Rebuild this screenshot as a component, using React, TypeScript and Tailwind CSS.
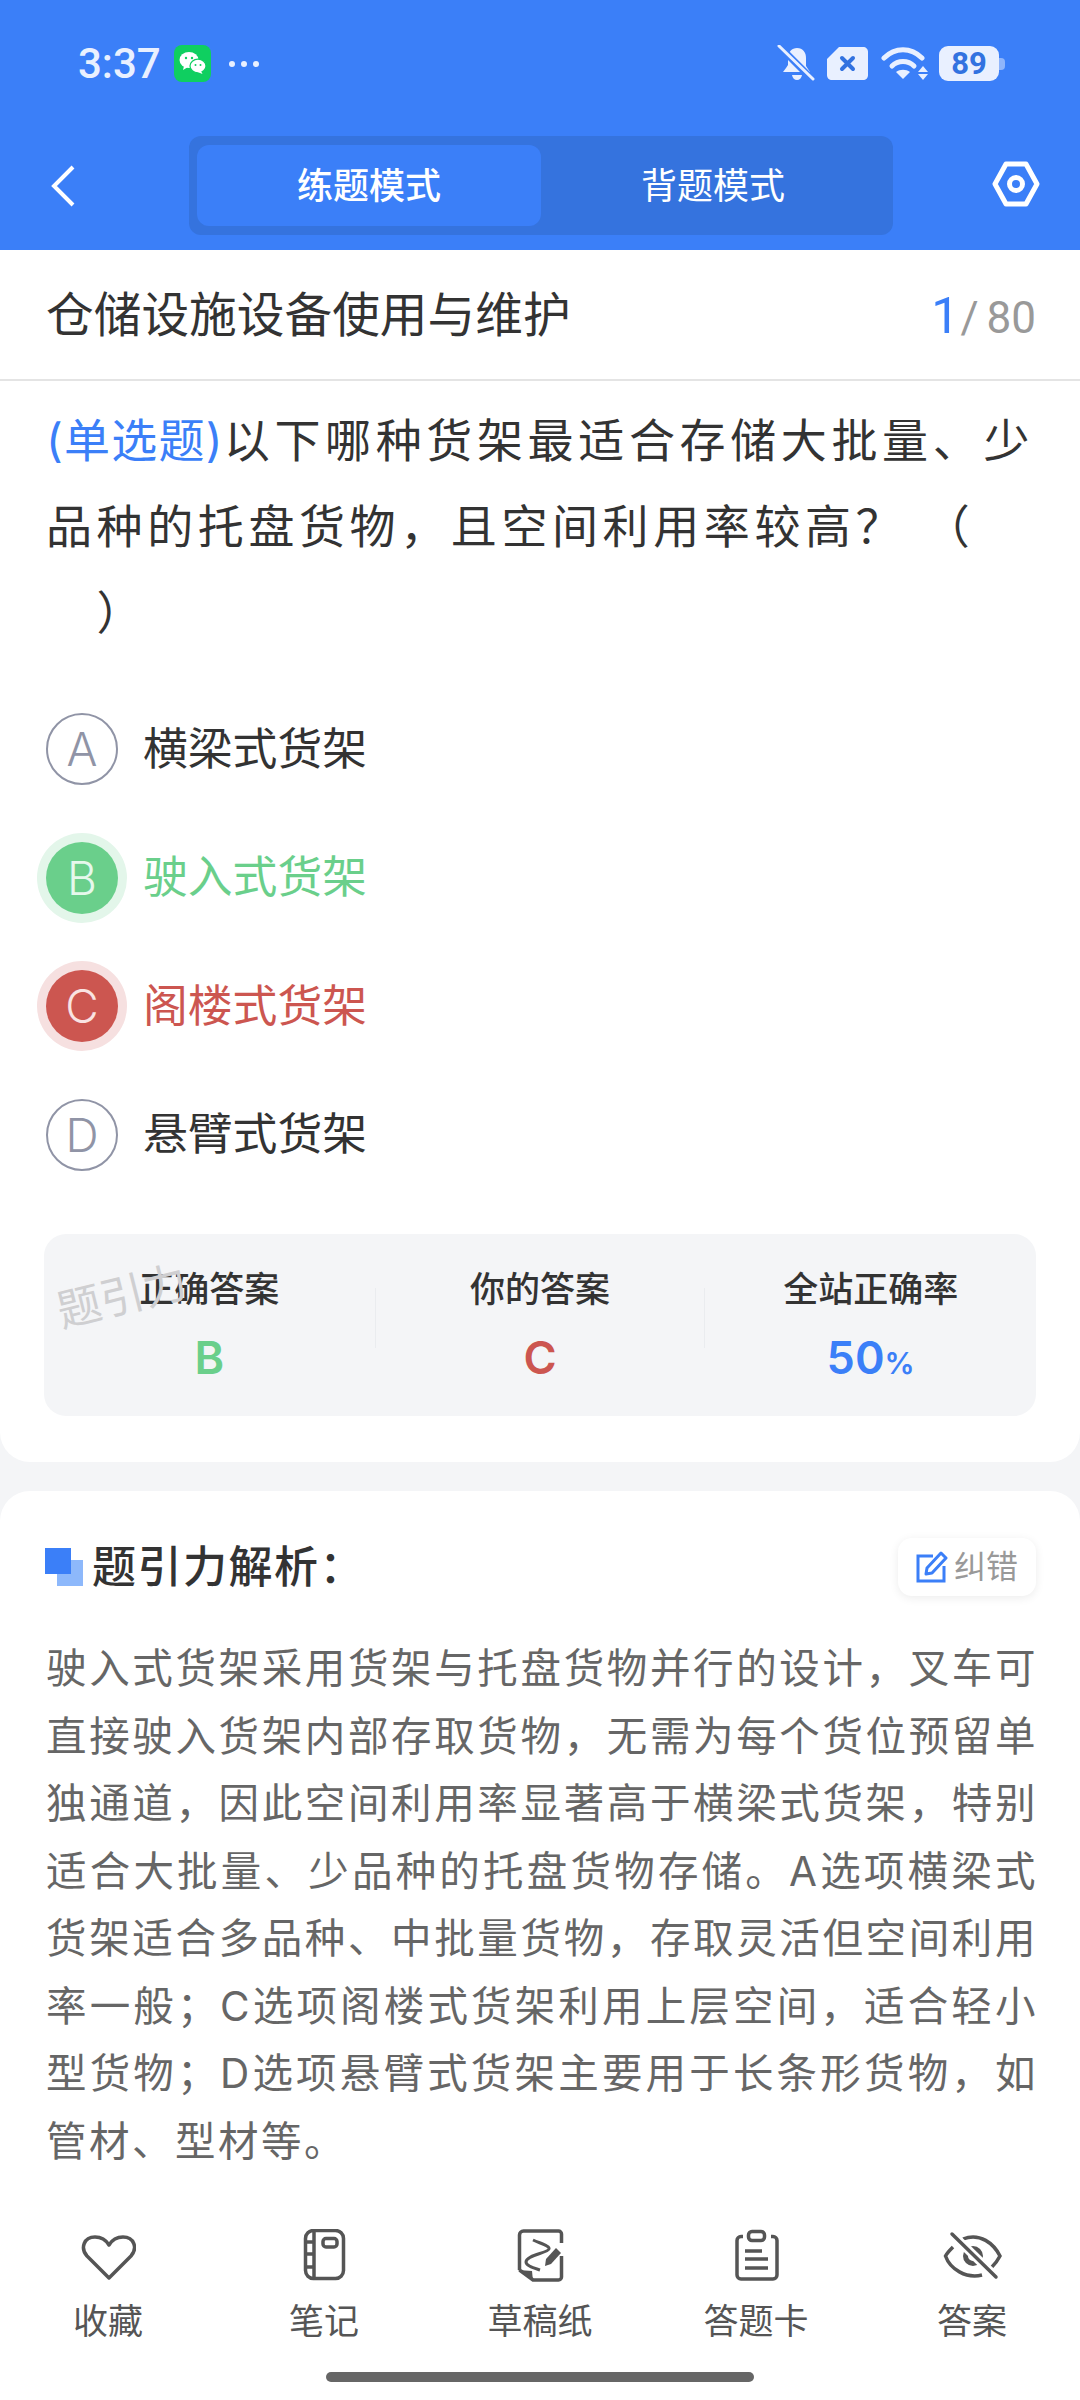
const FONT = "font-['Inter','Noto_Sans_CJK_SC',sans-serif]";

function StatusBar() {
  return (
    <div className="flex h-[136px] items-start justify-between pl-[78px] pr-[75px] pt-[45px] text-[#e9f0ff]">
      <div className="flex h-[37px] items-center">
        <span className="w-[80px] font-['Roboto'] text-[42px] leading-none font-medium">3:37</span>
        <svg className="ml-[16px]" width="37" height="37" viewBox="0 0 37 37">
          <rect width="37" height="37" rx="8" fill="#0fcf60" />
          <ellipse cx="15" cy="15" rx="9.5" ry="8" fill="#fff" />
          <path d="M10 21l-1 4 5-3z" fill="#fff" />
          <ellipse cx="24" cy="21" rx="8" ry="6.8" fill="#fff" stroke="#0fcf60" strokeWidth="1.2" />
          <path d="M27 26l1.5 3-5-2z" fill="#fff" />
          <circle cx="12" cy="13" r="1.2" fill="#0fcf60" />
          <circle cx="18" cy="13" r="1.2" fill="#0fcf60" />
          <circle cx="21.5" cy="20" r="1" fill="#0fcf60" />
          <circle cx="26.5" cy="20" r="1" fill="#0fcf60" />
        </svg>
        <div className="ml-[18px] flex gap-[6px]">
          <span className="h-[6px] w-[6px] rounded-full bg-[#e9f0ff]" />
          <span className="h-[6px] w-[6px] rounded-full bg-[#e9f0ff]" />
          <span className="h-[6px] w-[6px] rounded-full bg-[#e9f0ff]" />
        </div>
      </div>
      <div className="flex h-[37px] items-center">
        <svg width="38" height="38" viewBox="0 0 38 38">
          <path d="M20 3c6 0 9 4.500 9 10v8l4 6H17L6 27l3-4 2-3v-7c0-6 4-10 9-10z" fill="#e9f0ff" />
          <path d="M15 30h10c-.5 3-2.500 5-5 5s-4.500-2-5-5z" fill="#e9f0ff" />
          <path d="M2 1l33 33" stroke="#3b7ff8" strokeWidth="7" />
          <path d="M2 1l34 33" stroke="#e9f0ff" strokeWidth="3" strokeLinecap="round" />
        </svg>
        <svg className="ml-[11px]" width="43" height="35" viewBox="0 0 43 35">
          <path d="M13 1h24c3 0 5 2 5 5v23c0 3-2 5-5 5H6c-3 0-5-2-5-5V13z" fill="#e9f0ff" />
          <path d="M16 12l11 11M27 12L16 23" stroke="#3272e0" strokeWidth="4" strokeLinecap="round" />
        </svg>
        <svg className="ml-[12px]" width="47" height="35" viewBox="0 0 47 35">
          <path d="M3 12c11-11 27-11 38 0" fill="none" stroke="#e9f0ff" strokeWidth="5" strokeLinecap="round" />
          <path d="M11 20c6-6 16-6 22 0" fill="none" stroke="#e9f0ff" strokeWidth="5" strokeLinecap="round" />
          <path d="M15 26c4-3 10-3 14 0l-7 7z" fill="#e9f0ff" />
          <path d="M42 20l5 6H37zM37 28h10l-5 6z" fill="#e9f0ff" />
        </svg>
        <div className="ml-[11px] flex items-center">
          <div className="flex h-[35px] w-[60px] items-center justify-center rounded-[9px] bg-[#e9f0ff] font-['Roboto'] text-[31px] leading-none font-bold text-[#3272e0]">
            89
          </div>
          <div className="h-[12px] w-[6px] rounded-r-[4px] bg-[#8fb5fb]" />
        </div>
      </div>
    </div>
  );
}

function Header() {
  return (
    <div className="bg-[#3b7ff8]">
      <StatusBar />
      <div className="flex h-[114px] items-start justify-between pl-[50px] pr-[40px]">
        <svg className="mt-[28px]" width="26" height="44" viewBox="0 0 26 44" fill="none">
          <path d="M23 3L4 22l19 19" stroke="#fff" strokeWidth="4" />
        </svg>
        <div className="ml-[112px] flex h-[99px] w-[704px] rounded-[12px] bg-[#3573de] py-[9px] pl-[8px] pr-[8px] text-[36px] text-white">
          <div className="flex w-[344px] items-center justify-center rounded-[12px] bg-[#3b7ff8] font-medium">练题模式</div>
          <div className="flex flex-1 items-center justify-center">背题模式</div>
        </div>
        <svg className="ml-[98px] mt-[25px]" width="48" height="46" viewBox="0 0 48 46" fill="none">
          <path d="M14 3h20l11 20-11 20H14L3 23z" stroke="#fff" strokeWidth="5" strokeLinejoin="round" />
          <circle cx="24" cy="23" r="6.500" stroke="#fff" strokeWidth="5" />
        </svg>
      </div>
    </div>
  );
}

function Option({ letter, text, tone }: { letter: string; text: string; tone?: "right" | "wrong" }) {
  let circle = "border-2 border-[#9094a6] text-[#9094a6]";
  let label = "text-[#333333]";
  if (tone === "right") {
    circle = "bg-[#6acf8b] text-[#e6f8ec] shadow-[0_0_0_9px_#e3f6ea]";
    label = "text-[#6acf8b]";
  }
  if (tone === "wrong") {
    circle = "bg-[#cc5650] text-[#f9e3e2] shadow-[0_0_0_9px_#f6e0e0]";
    label = "text-[#cc5650]";
  }
  return (
    <div className="flex h-[128.500px] items-center">
      <div className={`flex h-[72px] w-[72px] items-center justify-center rounded-full text-[46px] leading-none font-light ${circle}`}>
        {letter}
      </div>
      <span className={`ml-[25px] text-[44.800px] leading-none ${label}`}>{text}</span>
    </div>
  );
}

function Stat({ title, children }: { title: string; children: React.ReactNode }) {
  return (
    <div className="flex flex-col items-center">
      <div className="text-[35px] leading-[50px] font-medium text-[#333333]">{title}</div>
      <div className="mt-[15px] h-[58px] text-[45px] leading-[58px] font-semibold">{children}</div>
    </div>
  );
}

function Question() {
  return (
    <div className="rounded-b-[30px] bg-white pb-[46px]">
      <div className="flex h-[131px] items-center justify-between border-b-2 border-[#e4e4e4] pl-[46px] pr-[44px] pt-[2px]">
        <span className="text-[47.700px] leading-none text-[#333333]">仓储设施设备使用与维护</span>
        <span className="flex items-baseline font-['Roboto'] leading-none text-[#999999]">
          <span className="text-[50px] text-[#3b7ff8]">1</span>
          <span className="ml-[1px] text-[44px]">/</span>
          <span className="ml-[8px] text-[44px]">80</span>
        </span>
      </div>
      <div className="px-[46px]">
        <p className="pt-[16px] text-justify text-[46px] leading-[86px] tracking-[4.600px] text-[#333333]">
          <span className="tracking-[1.200px] text-[#3b7ff8]">(单选题)</span>
          以下哪种货架最适合存储大批量、少品种的托盘货物，且空间利用率较高？ （
          <br />
          &emsp;）
        </p>
        <div className="mt-[30px]">
          <Option letter="A" text="横梁式货架" />
          <Option letter="B" text="驶入式货架" tone="right" />
          <Option letter="C" text="阁楼式货架" tone="wrong" />
          <Option letter="D" text="悬臂式货架" />
        </div>
      </div>
      <div className="relative mx-[44px] mt-[35px] grid h-[182px] grid-cols-3 items-center rounded-[22px] bg-[#f4f5f7]">
        <span className="absolute left-[12px] top-[40px] -rotate-[14deg] text-[44px] leading-none text-[#cfcfd1]">题引力</span>
        <Stat title="正确答案"><span className="text-[#6acf8b]">B</span></Stat>
        <div className="relative">
          <div className="absolute left-0 top-[24px] h-[60px] w-px bg-[#eaecef]" />
          <Stat title="你的答案"><span className="text-[#cc5650]">C</span></Stat>
          <div className="absolute right-0 top-[24px] h-[60px] w-px bg-[#eaecef]" />
        </div>
        <Stat title="全站正确率">
          <span className="text-[#3b7ff8]">50<span className="text-[30px]">%</span></span>
        </Stat>
      </div>
    </div>
  );
}

function Analysis() {
  return (
    <div className="mt-[29px] flex-1 rounded-t-[30px] bg-white pl-[46px] pr-[42px] pt-[47px]">
      <div className="flex items-center justify-between pr-[4px]">
        <div className="flex items-center">
          <div className="relative -ml-[1px] h-[38px] w-[38px]">
            <div className="absolute bottom-0 right-0 h-[26px] w-[26px] bg-[#8db8fb]" />
            <div className="absolute left-0 top-0 h-[26px] w-[26px] bg-[#3b7ff8]" />
          </div>
          <span className="ml-[9px] text-[44px] leading-none font-medium tracking-[1.500px] text-[#333333]">题引力解析：</span>
        </div>
        <div className="-mr-[2px] flex h-[58px] w-[138px] items-center justify-center rounded-[14px] bg-white shadow-[0_2px_10px_rgba(0,0,0,0.08)]">
          <svg width="32" height="32" viewBox="0 0 32 32" fill="none">
            <path d="M17 5H2v25h26V15" stroke="#3b7ff8" strokeWidth="3" />
            <path d="M11 17L25 2l5 5-14 15-6 1z" stroke="#3b7ff8" strokeWidth="3" strokeLinejoin="round" />
          </svg>
          <span className="ml-[6px] text-[32px] leading-none text-[#999999]">纠错</span>
        </div>
      </div>
      <p className="mt-[39px] text-justify text-[40.500px] leading-[67.500px] tracking-[2.500px] text-[#666666]">
        驶入式货架采用货架与托盘货物并行的设计，叉车可直接驶入货架内部存取货物，无需为每个货位预留单独通道，因此空间利用率显著高于横梁式货架，特别适合大批量、少品种的托盘货物存储。A选项横梁式货架适合多品种、中批量货物，存取灵活但空间利用率一般；C选项阁楼式货架利用上层空间，适合轻小型货物；D选项悬臂式货架主要用于长条形货物，如管材、型材等。
      </p>
    </div>
  );
}

const stroke = { stroke: "#555555", strokeWidth: 3.5, fill: "none" };

const NAV = [
  {
    label: "收藏",
    icon: (
      <svg width="56" height="56" viewBox="0 0 56 56">
        <path d="M29 49L7 27C0 19 4 8 15 8c6 0 11 3 14 8 3-5 8-8 14-8 11 0 15 11 8 19z" {...stroke} strokeLinejoin="round" />
      </svg>
    ),
  },
  {
    label: "笔记",
    icon: (
      <svg width="56" height="56" viewBox="0 0 56 56">
        <rect x="9.500" y="1.500" width="38" height="48" rx="8" {...stroke} />
        <path d="M18 1.500v48M9.500 13H18M9.500 25H18M9.500 38H18" {...stroke} />
        <rect x="27" y="9.500" width="14" height="8.500" rx="3" {...stroke} />
      </svg>
    ),
  },
  {
    label: "草稿纸",
    icon: (
      <svg width="56" height="56" viewBox="0 0 56 56">
        <path d="M7.500 41V6a4 4 0 0 1 4-4h35a3 3 0 0 1 3 3v9M49.500 27v21a3 3 0 0 1-3 3H21L7.500 41" {...stroke} />
        <path d="M6 41l14 1 1 10z" fill="#555555" />
        <path d="M21 11C30 15 38 17 37 20 36 24 14 26 14 33 14 37 22 39 28 41" {...stroke} strokeWidth="3" />
        <path d="M33 37l1-7 10-11 5 5-10 11z" fill="#555555" />
      </svg>
    ),
  },
  {
    label: "答题卡",
    icon: (
      <svg width="56" height="56" viewBox="0 0 56 56">
        <path d="M15 7.500h-2a4 4 0 0 0-4 4V46a4 4 0 0 0 4 4h32a4 4 0 0 0 4-4V11.500a4 4 0 0 0-4-4h-2" {...stroke} />
        <rect x="20.500" y="2.500" width="16" height="9" rx="3.500" {...stroke} />
        <path d="M17 22h17M17 30h23M17 39h23" {...stroke} />
      </svg>
    ),
  },
  {
    label: "答案",
    icon: (
      <svg width="60" height="56" viewBox="0 0 60 56">
        <path d="M21 10C38 3 52 15 58 27 56 31 53 35 49 39" {...stroke} />
        <path d="M11 18C8 21 5 24 3.500 27 8 40 24 50 40 46" {...stroke} />
        <circle cx="31" cy="27" r="7.500" stroke="#555555" strokeWidth="5" fill="none" />
        <path d="M10 5l44 43" stroke="#ffffff" strokeWidth="9" />
        <path d="M10 5l44 43" {...stroke} strokeLinecap="round" />
      </svg>
    ),
  },
];

function BottomNav() {
  return (
    <div className="h-[171px] bg-white">
      <div className="grid grid-cols-5">
        {NAV.map((n) => (
          <div key={n.label} className="flex flex-col items-center">
            <div className="flex h-[56px] items-center justify-center">{n.icon}</div>
            <span className="mt-[14px] text-[35px] leading-[44px] text-[#555555]">{n.label}</span>
          </div>
        ))}
      </div>
      <div className="mx-auto mt-[29px] h-[10px] w-[428px] rounded-full bg-[#666666]" />
    </div>
  );
}

export default function App() {
  return (
    <div className={`flex h-[2400px] w-[1080px] flex-col overflow-hidden bg-[#f4f5f7] ${FONT}`}>
      <Header />
      <Question />
      <Analysis />
      <BottomNav />
    </div>
  );
}
